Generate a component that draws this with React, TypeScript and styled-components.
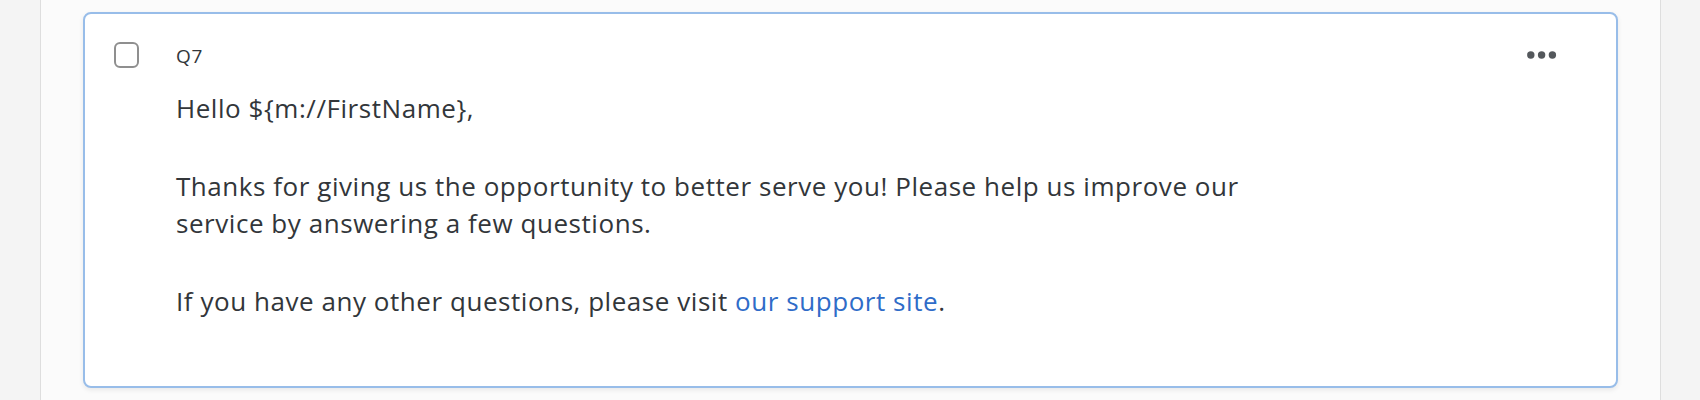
import React from "react";
import styled, { createGlobalStyle } from "styled-components";

const GlobalStyle = createGlobalStyle`
  html, body {
    margin: 0;
    padding: 0;
    background: #fbfbfb;
  }
  body {
    font-family: "Open Sans", "Liberation Sans", sans-serif;
    color: #32363a;
  }
`;

const Page = styled.div`
  display: flex;
  width: 1700px;
  height: 400px;
  overflow: hidden;
`;

const SideStrip = styled.div<{ $side: "left" | "right" }>`
  flex: 0 0 ${(p) => (p.$side === "left" ? "40px" : "39px")};
  background: #f4f4f4;
  ${(p) =>
    p.$side === "left"
      ? "border-right: 1px solid #dedede;"
      : "border-left: 1px solid #dedede;"}
`;

const Canvas = styled.main`
  flex: 1;
  background: #fbfbfb;
  padding: 12px 42px 0 42px;
`;

const QuestionCard = styled.section`
  background: #ffffff;
  border: 2px solid #98bde9;
  border-radius: 8px;
  box-shadow: 0 2px 5px rgba(0, 0, 0, 0.08);
  padding: 28px 59px 66px 29px;
`;

const Header = styled.div`
  display: flex;
  align-items: center;
  height: 26px;
`;

const Checkbox = styled.span`
  flex: 0 0 auto;
  width: 25px;
  height: 26px;
  box-sizing: border-box;
  border: 2px solid #8f8f8f;
  border-radius: 6px;
  background: #fff;
`;

const QuestionLabel = styled.span`
  margin-left: 37px;
  font-size: 19px;
  letter-spacing: 0.7px;
  line-height: 26px;
  color: #32363a;
  padding-top: 1px;
`;

const MenuButton = styled.button`
  margin-left: auto;
  border: 0;
  background: none;
  padding: 0;
  display: flex;
  align-items: center;
  cursor: pointer;
`;

const Body = styled.div`
  margin: 22px 0 0 62px;
  max-width: 1100px;
  font-size: 26px;
  letter-spacing: 0.55px;
  line-height: 37px;
  color: #32363a;
`;

const Paragraph = styled.p`
  margin: 0 0 41px 0;
  &:last-child {
    margin-bottom: 0;
  }
`;

const Link = styled.a`
  color: #2f6cc8;
  text-decoration: none;
`;

const Dots = () => (
  <svg width="30" height="8" viewBox="0 0 30 8">
    <circle cx="3.8" cy="4" r="3.7" fill="#54585c" />
    <circle cx="14.6" cy="4" r="3.7" fill="#54585c" />
    <circle cx="25.4" cy="4" r="3.7" fill="#54585c" />
  </svg>
);

export default function App() {
  return (
    <>
      <GlobalStyle />
      <Page>
        <SideStrip $side="left" />
        <Canvas>
          <QuestionCard>
            <Header>
              <Checkbox role="checkbox" aria-checked="false" />
              <QuestionLabel>Q7</QuestionLabel>
              <MenuButton aria-label="Question options">
                <Dots />
              </MenuButton>
            </Header>
            <Body>
              <Paragraph>Hello ${"{"}m://FirstName{"}"},</Paragraph>
              <Paragraph>
                Thanks for giving us the opportunity to better serve you! Please
                help us improve our
                <br />
                service by answering a few questions.
              </Paragraph>
              <Paragraph>
                If you have any other questions, please visit{" "}
                <Link href="#">our support site</Link>.
              </Paragraph>
            </Body>
          </QuestionCard>
        </Canvas>
        <SideStrip $side="right" />
      </Page>
    </>
  );
}
